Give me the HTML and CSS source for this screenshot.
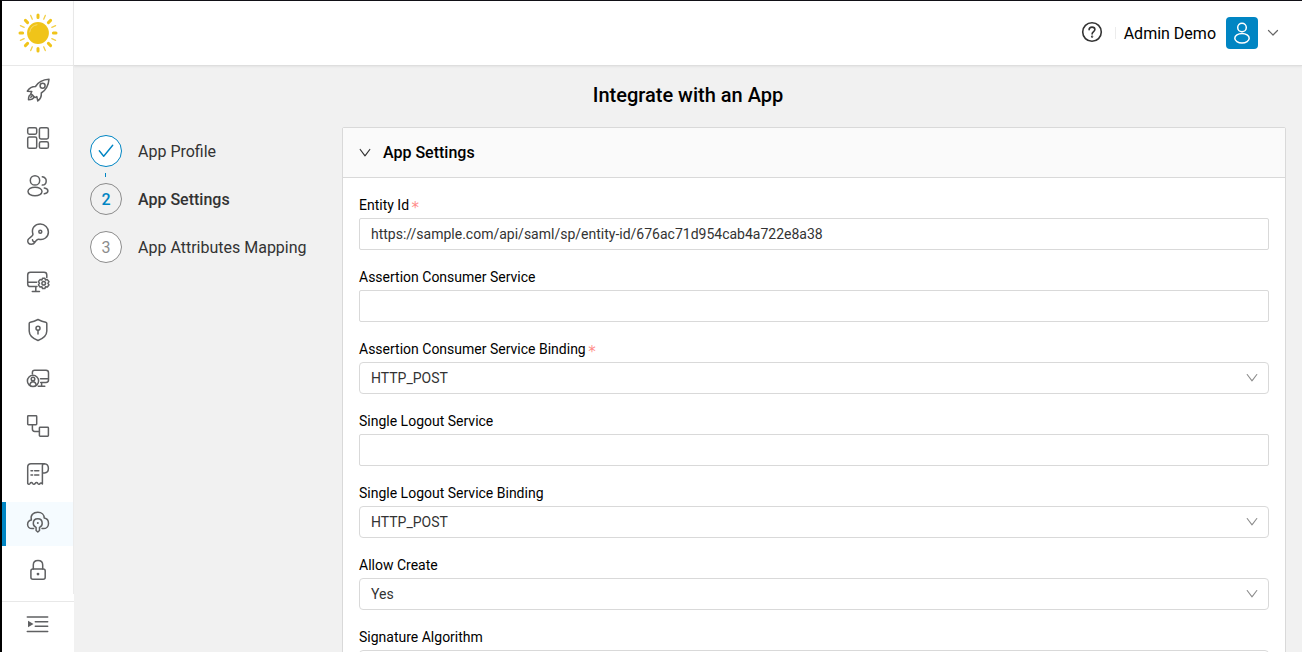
FILE: index.html
```html
<!DOCTYPE html>
<html lang="en">
<head>
<meta charset="utf-8">
<title>Integrate with an App</title>
<link rel="stylesheet" href="styles.css">
</head>
<body>
<div class="frame">
  <aside class="sidebar">
    <div class="logo">
      <svg width="42" height="42" viewBox="-21 -21 42 42">
        <circle r="10.9" fill="#f0c419"/>
        <path d="M-8.3-1A8.5 8.5 0 0 1-1-8.3" fill="none" stroke="#f7dc6f" stroke-width="1"/>
        <g stroke="#f0c419" stroke-width="3" stroke-linecap="round">
          <path d="M0-15.4V-18M0 15.4V18M-15.4 0H-18M15.4 0H18M-10.4-10.4l-2.2-2.2M10.4-10.4l2.2-2.2M-10.4 10.4l-2.2 2.2M10.4 10.4l2.2 2.2"/>
        </g>
        <g stroke="#f3cf45" stroke-width="1.3" stroke-linecap="round">
          <path d="M5.7-13.8L7.3-17.6M-5.7-13.8L-7.3-17.6M5.7 13.8L7.3 17.6M-5.7 13.8L-7.3 17.6M13.8-5.7L17.6-7.3M-13.8-5.7L-17.6-7.3M13.8 5.7L17.6 7.3M-13.8 5.7L-17.6 7.3"/>
        </g>
      </svg>
    </div>
    <nav class="nav">
      <a class="nav-item"><svg class="icon" viewBox="0 0 24 24"><path d="M23 1.2C17.500 1.500 12.500 3.500 9.500 8.500C6 8.500 3 10.500 1.300 13.200L5.800 13.500L4.800 15.500L9 19.600L10.800 18.600L11.800 23C14.500 21 15.600 18.500 15.300 15C20 12 22.500 7 23 1.200Z"/><circle cx="16.600" cy="7.800" r="2.500"/><path d="M5 16.500C2.800 17 2.500 19.500 2.500 21.700C4.800 21.700 7.200 21.300 7.800 19.300M6.700 17.300L4.800 19.300"/></svg></a>
      <a class="nav-item"><svg class="icon" viewBox="0 0 24 24"><rect x="1.700" y="1.700" width="9" height="6.500" rx="1.600"/><rect x="1.700" y="10.900" width="9" height="11.400" rx="1.600"/><rect x="13.400" y="1.700" width="9" height="11.200" rx="1.600"/><rect x="13.400" y="15.800" width="9" height="6.500" rx="1.600"/></svg></a>
      <a class="nav-item"><svg class="icon" viewBox="0 0 24 24"><circle cx="9" cy="6.400" r="4.700"/><ellipse cx="9" cy="17.500" rx="7" ry="4.300"/><path d="M16.300 2.800C19 3.300 20.200 5 20.200 6.900C20.200 9.300 18.500 11 16.300 11.100M18.300 14C20.700 14.400 21.900 15.500 21.900 16.900C21.900 18.200 20.800 19.300 18.300 19.800"/></svg></a>
      <a class="nav-item"><svg class="icon" viewBox="0 0 24 24"><path d="M6.900 12C5 5.800 9.200 2.100 14.300 2.100C18.900 2.100 22.400 5.700 22.400 10C22.400 15 17.800 18.600 12.800 17.300C11.600 17 11 17.600 9.600 19.200C8.700 20.200 8.700 22.300 5.300 22.300C2.600 22.300 1.300 20.200 1.900 18C2.500 15.700 7.500 14.500 6.900 12ZM6.500 17.700C6.600 19.100 7.700 20 9.100 19.700"/><circle cx="14.300" cy="9.800" r="1.500"/></svg></a>
      <a class="nav-item"><svg class="icon" viewBox="0 0 24 24"><path d="M20.800 7.500V5C20.800 3.200 19.800 2.300 18 2.300H4.500C2.700 2.300 1.700 3.200 1.700 5V14C1.700 15.800 2.700 16.600 4.500 16.600H11M1.700 12.200H10.600M9.800 16.600V21.400M6.300 21.400H13.500"/><path d="M16.500 8.200H18.900L19.500 10L21.400 9.600L23 11.700L21.900 13.300L23 14.900L21.400 17L19.500 16.700L18.900 18.500H16.500L15.900 16.700L14 17L12.400 14.900L13.500 13.300L12.400 11.700L14 9.600L15.900 10Z"/><circle cx="17.700" cy="13.300" r="1.800"/></svg></a>
      <a class="nav-item"><svg class="icon" viewBox="0 0 24 24"><path d="M12 1.500C15 3.100 17.500 3.900 19.700 4.300C20.400 4.500 20.800 4.900 20.800 5.600V13C20.800 17.600 16.900 20.600 12 22.500C7.100 20.600 3.200 17.600 3.200 13V5.600C3.200 4.900 3.600 4.500 4.300 4.300C6.500 3.900 9 3.100 12 1.500Z"/><circle cx="12" cy="10.300" r="2"/><path d="M12 12.300V16"/></svg></a>
      <a class="nav-item"><svg class="icon" viewBox="0 0 24 24"><path d="M6.400 7.900V6.500C6.400 5 7.300 4.300 8.700 4.300H20C21.600 4.300 22.500 5.100 22.500 6.700V14C22.500 15.600 21.600 16.400 20 16.400H14.700M14.500 12.800H22.500M15.600 16.400V20.300M12.300 20.300H18.800"/><circle cx="7" cy="14.900" r="5.600"/><circle cx="7" cy="13" r="1.800"/><path d="M3.800 19C4.200 16.500 5.300 15.700 7 15.700S9.800 16.500 10.200 19"/></svg></a>
      <a class="nav-item"><svg class="icon" viewBox="0 0 24 24"><rect x="1.700" y="1.700" width="9" height="9" rx=".7"/><rect x="13.400" y="13.300" width="9" height="9" rx=".7"/><path d="M6.400 10.700V15C6.400 16.600 7.100 17.400 8.700 17.400H13.400"/></svg></a>
      <a class="nav-item"><svg class="icon" viewBox="0 0 24 24"><path d="M16.400 11V3.700C16.400 2.500 17.500 1.800 18.700 1.800H5C2.800 1.800 1.700 3 1.700 5V21.300C2.300 22.500 3.400 22.500 4.100 21.300C4.700 20.200 6 20.200 6.600 21.300C7.300 22.500 8.600 22.500 9.200 21.300C9.900 20.200 11.200 20.200 11.800 21.300C12.500 22.500 13.600 22.500 14.200 21.300C14.800 20.600 15.500 21 16.400 22V10.900H18.500C21 10.900 22.400 9 22.400 6.300C22.400 3.600 21 1.800 18.500 1.800"/><path d="M5 8.800H6.600M8.700 8.800H12.800M5 13H6.600M8.700 13H12.800"/></svg></a>
      <a class="nav-item nav-item-active"><svg class="icon" viewBox="0 0 24 24"><path d="M7.600 18.600H6C3.400 18.600 1.600 16.700 1.600 14.500C1.600 12 3.100 10.500 5.400 10.100C4.100 5.200 7.400 2.300 11.800 2.300C15.900 2.300 18.200 5 18.200 8.100C21 8.500 22.500 10.800 22.500 13.400C22.500 16.500 20.200 18.600 17.500 18.600H16"/><path d="M10.100 17.400C8.200 16.800 7.300 15.200 7.300 13.300C7.300 10.600 9.200 8.700 11.800 8.700S16.200 10.600 16.200 13.300C16.200 15.200 15.300 16.800 13.500 17.400V20.500L11.800 22L10.100 20.500Z"/><circle class="dot" cx="11.800" cy="13" r="1"/></svg></a>
      <a class="nav-item"><svg class="icon" viewBox="0 0 24 24"><rect x="4.900" y="11" width="14.300" height="10.300" rx="2"/><path d="M7.300 11V7C7.300 4.200 9.200 2.500 12 2.500S16.700 4.200 16.700 7V11"/><circle class="dot" cx="12" cy="16.100" r="1.400"/></svg></a>
    </nav>
    <div class="collapse"><svg class="icon" viewBox="0 0 24 24"><path d="M1.300 5H21.700M9.300 9.700H21.700M9.300 14.300H21.700M1.300 19.500H21.700"/><path class="dot" d="M2 8.800L7.500 12L2 15.200Z"/></svg></div>
  </aside>
  <div class="main">
    <header class="topbar">
      <svg class="help" viewBox="0 0 22 22"><circle cx="11" cy="11" r="9.300"/><path d="M8.100 8.800C8.100 7 9.300 6.100 11 6.100S13.900 7.100 13.900 8.600C13.900 10.600 11.100 10.700 11.100 13"/><circle cx="11.100" cy="15.600" r=".4"/></svg>
      <span class="divider"></span>
      <span class="user">Admin Demo</span>
      <span class="avatar"><svg width="20" height="24" viewBox="0 0 20 24"><circle cx="10" cy="6.500" r="4.300"/><ellipse cx="10" cy="17.300" rx="7.200" ry="4.700"/></svg></span>
      <svg class="caret" viewBox="0 0 12 8"><path d="M1.500 1.500L6 6L10.500 1.500"/></svg>
    </header>
    <h1 class="title">Integrate with an App</h1>
    <div class="content">
      <ol class="steps">
        <li class="step"><span class="bullet bullet-done"><svg width="16" height="14" viewBox="0 0 16 14"><path d="M1.300 6.800L5.700 12.200L14.700 1.200"/></svg></span><span class="step-text">App Profile</span></li>
        <li class="step step-current"><span class="bullet bullet-current"><span class="step-text">2</span></span><span class="step-text">App Settings</span></li>
        <li class="step"><span class="bullet"><span class="step-text">3</span></span><span class="step-text">App Attributes Mapping</span></li>
      </ol>
      <section class="panel">
        <h2 class="panel-head"><svg class="chev" viewBox="0 0 12 10"><path d="M1.200 1.500L6 7.800L10.800 1.500"/></svg>App Settings</h2>
        <div class="form">
          <div class="field"><label class="label">Entity Id <span class="req">*</span></label><div class="control">https://sample.com/api/saml/sp/entity-id/676ac71d954cab4a722e8a38</div></div>
          <div class="field"><label class="label">Assertion Consumer Service</label><div class="control"></div></div>
          <div class="field"><label class="label">Assertion Consumer Service Binding <span class="req">*</span></label><div class="control select">HTTP_POST<svg class="chev" viewBox="0 0 12 10"><path d="M1.200 1.500L6 7.800L10.800 1.500"/></svg></div></div>
          <div class="field"><label class="label">Single Logout Service</label><div class="control"></div></div>
          <div class="field"><label class="label">Single Logout Service Binding</label><div class="control select">HTTP_POST<svg class="chev" viewBox="0 0 12 10"><path d="M1.200 1.500L6 7.800L10.800 1.500"/></svg></div></div>
          <div class="field"><label class="label">Allow Create</label><div class="control select">Yes<svg class="chev" viewBox="0 0 12 10"><path d="M1.200 1.500L6 7.800L10.800 1.500"/></svg></div></div>
          <div class="field"><label class="label">Signature Algorithm</label><div class="control select"></div></div>
        </div>
      </section>
    </div>
  </div>
</div>
</body>
</html>
```
FILE: styles.css
```css
* { box-sizing: border-box; }
body { margin: 0; font: 14px/22px Roboto, "Liberation Sans", sans-serif; color: #000; }
.frame { display: flex; height: 652px; overflow: hidden; background: #f1f1f1; border-top: 1px solid #111016; border-left: 2px solid #000; }
svg { display: block; flex: none; fill: none; stroke-linecap: round; stroke-linejoin: round; }

.sidebar { display: flex; flex-direction: column; flex: none; width: 72px; background: #fff; }
.logo { display: flex; align-items: center; justify-content: center; height: 65px; border-right: 1px solid #ececec; border-bottom: 1px solid #e8e8e8; }
.nav { display: flex; flex-direction: column; gap: 4px; height: 528px; margin-bottom: 7px; padding-top: 4px; border-right: 1px solid #ececec; }
.nav-item { display: flex; flex: none; align-items: center; height: 44px; padding: 0 0 4px 24px; }
.nav-item-active { padding-left: 20px; background: #f5fbff; border-left: 4px solid #0085c3; }
.icon { width: 24px; height: 24px; stroke: #5f6062; stroke-width: 1.5; }
.icon .dot { fill: #5f6062; stroke: none; }
.collapse { display: flex; align-items: center; height: 47px; padding: 0 0 2px 24px; border-top: 1px solid #e8e8e8; }

.main { display: flex; flex-direction: column; flex: 1; min-width: 0; }
.topbar { display: flex; align-items: center; justify-content: flex-end; flex: none; height: 65px; padding-right: 23px; background: #fff; border-bottom: 1px solid #dedede; box-shadow: 0 1px 2px rgba(0, 0, 0, .06); }
.help { width: 22px; height: 22px; margin-bottom: 2px; stroke: #333; stroke-width: 1.6; }
.divider { width: 1px; height: 12px; margin: 0 8px 0 12px; background: #ececec; }
.user { padding-top: 2px; font-size: 16px; line-height: 24px; }
.avatar { display: flex; align-items: center; justify-content: center; width: 32px; height: 32px; margin: 0 9px 0 10px; background: #0085c3; border-radius: 4px; stroke: #fff; stroke-width: 1.5; }
.caret { width: 12px; height: 8px; stroke: #666; stroke-width: 1.2; }

.title { margin: 15px 0 18px; font-size: 20px; font-weight: 500; line-height: 28px; text-align: center; }
.content { display: flex; padding: 0 16px; }
.steps { display: flex; flex-direction: column; gap: 16px; flex: none; width: 252px; margin: 0; padding: 8px 0 0; list-style: none; }
.step { position: relative; display: flex; align-items: center; gap: 16px; height: 32px; font-size: 16px; color: #333; }
.step-text { padding-top: 2px; }
.step-current { font-weight: 500; }
.step-current::before { content: ""; position: absolute; left: 15px; top: -10px; width: 1px; height: 4px; background: #0085c3; }
.bullet { display: flex; align-items: center; justify-content: center; width: 32px; height: 32px; border: 1px solid #8c8c8c; border-radius: 50%; background: #fff; color: #8c8c8c; }
.bullet-done { border-color: #0085c3; stroke: #0085c3; stroke-width: 1.4; }
.bullet-current { background: #f1f1f1; color: #0085c3; }

.panel { flex: 1; height: 900px; background: #fff; border: 1px solid #d9d9d9; border-radius: 2px; }
.panel-head { display: flex; align-items: center; gap: 12px; height: 50px; margin: 0; padding-left: 16px; background: #fafafa; border-bottom: 1px solid #d9d9d9; font-size: 16px; font-weight: 500; }
.panel-head .chev { margin-top: 1px; }
.chev { width: 12px; height: 10px; stroke: #333; stroke-width: 1.2; }
.form { display: grid; gap: 16px; padding: 16px; }
.label { display: block; height: 24px; }
.req { color: #ff8a88; font: 15px/12px "DejaVu Sans", sans-serif; vertical-align: -3px; margin-left: -1px; }
.control { display: flex; align-items: center; height: 32px; padding: 0 11px; border: 1px solid #d9d9d9; border-radius: 2px; color: #333; }
.select { justify-content: space-between; padding-right: 10px; border-radius: 4px; }
.select .chev { stroke: #8c8c8c; stroke-width: 1.1; }
```
